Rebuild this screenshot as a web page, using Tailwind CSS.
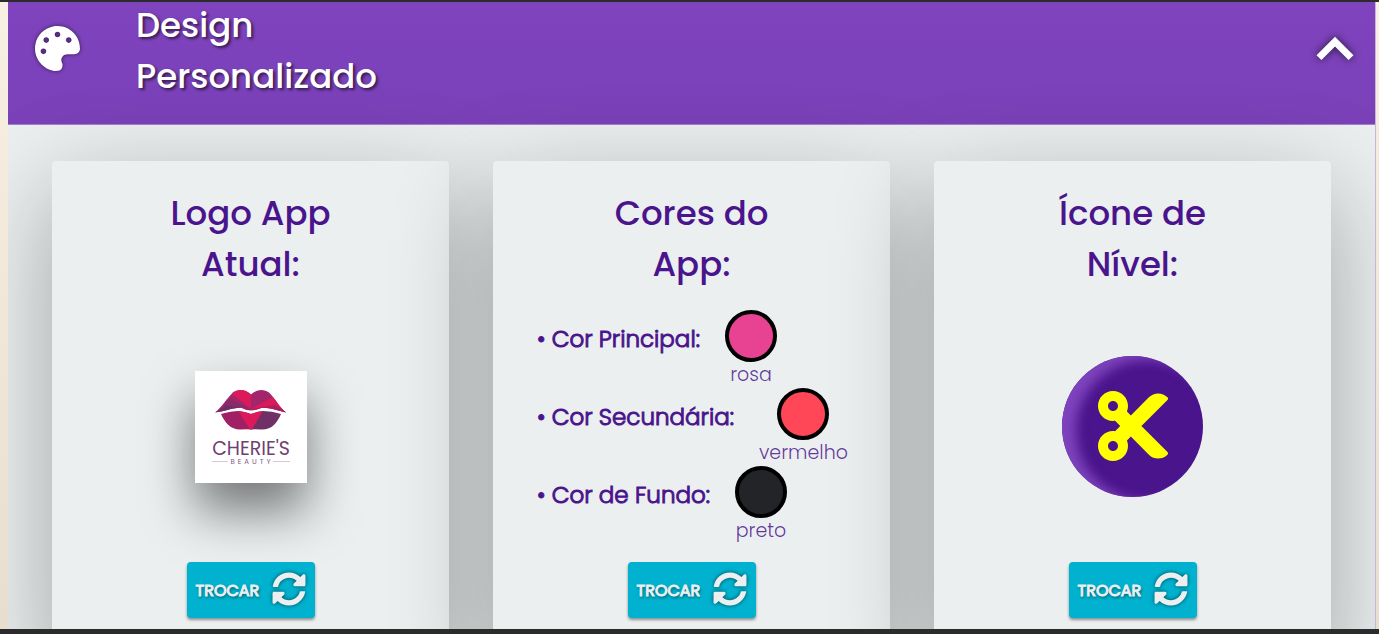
<!DOCTYPE html>
<html lang="pt-BR">
<head>
<meta charset="utf-8">
<meta name="viewport" content="width=device-width, initial-scale=1">
<title>Design Personalizado</title>
<script src="https://cdn.jsdelivr.net/npm/@tailwindcss/browser@4"></script>
</head>
<body class="flex h-screen flex-col overflow-hidden border-t-2 border-b-5 border-[#2b2b2b] bg-linear-to-b from-[#f8f0e2] to-[#e7decf] pr-[3px] pl-2 font-['Poppins','Inter',sans-serif] font-light text-[#4a148c]">
<svg class="hidden">
  <symbol id="sync" viewBox="0 0 512 512"><path d="M370.72 133.28C339.458 104.008 298.888 87.962 255.848 88c-77.458.068-144.328 53.178-162.791 126.85-1.344 5.363-6.122 9.15-11.651 9.15H24.103c-7.498 0-13.194-6.807-11.807-14.176C33.933 94.924 134.813 8 256 8c66.448 0 126.791 26.136 171.315 68.685L463.03 40.97C478.149 25.851 504 36.559 504 57.941V192c0 13.255-10.745 24-24 24H345.941c-21.382 0-32.09-25.851-16.971-40.971l41.75-41.749zM32 296h134.059c21.382 0 32.09 25.851 16.971 40.971l-41.75 41.75c31.262 29.273 71.835 45.319 114.876 45.28 77.418-.07 144.315-53.144 162.787-126.849 1.344-5.363 6.122-9.15 11.651-9.15h57.304c7.498 0 13.194 6.807 11.807 14.176C478.067 417.076 377.187 504 256 504c-66.448 0-126.791-26.136-171.315-68.685L48.97 471.03C33.851 486.149 8 475.441 8 454.059V320c0-13.255 10.745-24 24-24z"/></symbol>
</svg>
<section class="flex min-h-0 flex-1 flex-col overflow-hidden border-r border-[#c5b8d0] bg-[#ebeff0]">
  <header class="flex shrink-0 items-start border-b border-[#a67fd0] bg-linear-to-b from-[#7e43bd] to-[#7b41b9] pr-[3px] pb-[22px] pl-[27px] text-white">
    <svg class="mt-6 size-[45px] shrink-0 fill-white drop-shadow-[0_0_2px_rgba(0,0,0,0.6)]" viewBox="0 0 512 512" aria-hidden="true"><path d="M204.3 5C104.9 24.4 24.8 104.3 5.2 203.4c-37 187 131.7 326.4 258.8 306.7 41.2-6.4 61.4-54.6 42.5-91.7-23.1-45.4 9.9-98.4 60.9-98.4h79.7c35.8 0 64.8-29.6 64.9-65.3C511.5 97.1 368.1-26.9 204.3 5zM96 320c-17.7 0-32-14.3-32-32s14.3-32 32-32 32 14.3 32 32-14.3 32-32 32zm32-128c-17.7 0-32-14.3-32-32s14.3-32 32-32 32 14.3 32 32-14.3 32-32 32zm128-64c-17.7 0-32-14.3-32-32s14.3-32 32-32 32 14.3 32 32-14.3 32-32 32zm128 64c-17.7 0-32-14.3-32-32s14.3-32 32-32 32 14.3 32 32-14.3 32-32 32z"/></svg>
    <h1 class="-mt-0.5 ml-14 w-64 text-[34px] leading-[51px] font-medium text-shadow-[2px_2px_3px_rgba(0,0,0,0.6)]">Design Personalizado</h1>
    <button type="button" aria-label="Recolher" class="mt-[10px] ml-auto shrink-0">
      <svg class="size-[74px] fill-white drop-shadow-[0_0_4px_rgba(0,0,0,0.7)]" viewBox="0 0 24 24" aria-hidden="true"><path d="M12 8l-6 6 1.600 1.600L12 11.200l4.400 4.400L18 14z"/></svg>
    </button>
  </header>

  <div class="grid shrink-0 grid-cols-3 gap-11 px-11 pt-9 text-center">
    <article class="flex flex-col items-center rounded bg-[#ebeff0] pt-[27px] pb-11 shadow-[0_30px_100px_rgba(0,0,0,0.32)]">
      <h2 class="w-48 text-[34px] leading-[51px] font-medium">Logo App Atual:</h2>
      <div class="flex h-[272px] items-center pt-0.5">
        <svg class="size-[112px] bg-white shadow-[0_28px_50px_rgba(0,0,0,0.5)]" viewBox="0 0 112 112" role="img" aria-label="Cherie's Beauty">
          <clipPath id="upper"><path d="M20 41.5C27 36 32 27 38 21.5C43 18 50 18 56 23.500C62 18 69 18 74 21.500C80 27 84 36 91 41.500C83 40 74 36 66 37Q60 39.500 56 39.500Q51 39.500 47 37C39 36 29 41 20 41.500Z"/></clipPath>
          <clipPath id="lower"><path d="M26 43Q36 40 44 40Q51 41 56 43Q61 41 68 40Q77 40 86 43C82 52 77 59 66 58.500Q60 58 56 58.500Q51 58 46 58.500C36 59 30 52 26 43Z"/></clipPath>
          <g clip-path="url(#upper)">
            <path fill="#a3266a" d="M18 15h76v30H18z"/>
            <path fill="#dc1a5b" d="M36 22L44 15L56 22V38Z"/>
            <path fill="#6e2f68" d="M18 44L33 32L50 38Z"/>
            <path fill="#8a2a6a" d="M56 38L28 34L36 28Z"/>
            <path fill="#dc1a5b" d="M56 38L78 26L95 44Z"/>
            <path fill="#a81f62" d="M56 38L80 34L95 43Z"/>
          </g>
          <g clip-path="url(#lower)">
            <path fill="#a11f64" d="M24 38h33v22H24z"/>
            <path fill="#713065" d="M56 38h32v22H56z"/>
            <path fill="#dc1a5b" d="M42 38H69L56 60Z"/>
          </g>
          <text x="56" y="84" text-anchor="middle" class="fill-[#70406f] text-[19px] font-normal">CHERIE'S</text>
          <text x="57" y="93" text-anchor="middle" class="fill-[#81587d] text-[7px] font-normal tracking-[3px]">BEAUTY</text>
          <path stroke="#d9c7d5" d="M17 90.500h16M78 90.500h17"/>
        </svg>
      </div>
      <button type="button" class="flex h-14 w-32 items-center justify-between rounded bg-[#00b2cf] px-[9px] pt-0.5 text-base font-normal text-[#ebeff0] shadow-[0_2px_3px_rgba(0,0,0,0.4)] [-webkit-text-stroke:1px] text-shadow-[1px_2px_3px_rgba(0,0,0,0.6)]">TROCAR<svg class="-mt-1 size-[34px] fill-current drop-shadow-[0_0_2px_rgba(0,0,0,0.6)] [-webkit-text-stroke:0]" aria-hidden="true"><use href="#sync"/></svg></button>
    </article>

    <article class="flex flex-col items-center rounded bg-[#ebeff0] pt-[27px] pb-11 shadow-[0_30px_100px_rgba(0,0,0,0.32)]">
      <h2 class="w-48 text-[34px] leading-[51px] font-medium">Cores do App:</h2>
      <ul class="flex h-[272px] flex-col justify-center self-stretch pt-0.5 pl-11 text-[23px]">
        <li class="flex gap-[25px]"><span class="leading-[58px] whitespace-nowrap [-webkit-text-stroke:1px]">• Cor Principal:</span><span class="flex flex-col items-center"><span class="size-[52px] rounded-full border-4 border-black bg-[#e84393]"></span><span class="text-[19px] leading-[26px] text-[#4a148c]/85">rosa</span></span></li>
        <li class="flex gap-[25px]"><span class="leading-[58px] whitespace-nowrap [-webkit-text-stroke:1px]">• Cor Secundária:</span><span class="flex flex-col items-center"><span class="size-[52px] rounded-full border-4 border-black bg-[#ff4757]"></span><span class="text-[19px] leading-[26px] text-[#4a148c]/85">vermelho</span></span></li>
        <li class="flex gap-[25px]"><span class="leading-[58px] whitespace-nowrap [-webkit-text-stroke:1px]">• Cor de Fundo:</span><span class="flex flex-col items-center"><span class="size-[52px] rounded-full border-4 border-black bg-[#232428]"></span><span class="text-[19px] leading-[26px] text-[#4a148c]/85">preto</span></span></li>
      </ul>
      <button type="button" class="flex h-14 w-32 items-center justify-between rounded bg-[#00b2cf] px-[9px] pt-0.5 text-base font-normal text-[#ebeff0] shadow-[0_2px_3px_rgba(0,0,0,0.4)] [-webkit-text-stroke:1px] text-shadow-[1px_2px_3px_rgba(0,0,0,0.6)]">TROCAR<svg class="-mt-1 size-[34px] fill-current drop-shadow-[0_0_2px_rgba(0,0,0,0.6)] [-webkit-text-stroke:0]" aria-hidden="true"><use href="#sync"/></svg></button>
    </article>

    <article class="flex flex-col items-center rounded bg-[#ebeff0] pt-[27px] pb-11 shadow-[0_30px_100px_rgba(0,0,0,0.32)]">
      <h2 class="w-48 text-[34px] leading-[51px] font-medium">Ícone de Nível:</h2>
      <div class="flex h-[272px] items-center">
        <div class="flex size-[141px] items-center justify-center rounded-full bg-[#4a148c] shadow-[inset_14px_4px_12px_#7e43bd]">
          <svg class="h-20 w-[70px] fill-[#ffff00]" viewBox="0 0 448 512" aria-hidden="true"><path d="M278.06 256L444.48 89.57c4.69-4.69 4.69-12.29 0-16.97-32.8-32.8-85.99-32.8-118.79 0L210.18 188.12l-24.86-24.86c4.31-10.92 6.68-22.81 6.68-35.26 0-53.02-42.98-96-96-96S0 74.98 0 128s42.98 96 96 96c4.54 0 8.99-.32 13.36-.93L142.29 256l-32.93 32.93c-4.37-.61-8.83-.93-13.36-.93-53.02 0-96 42.98-96 96s42.98 96 96 96 96-42.98 96-96c0-12.45-2.37-24.34-6.68-35.26l24.86-24.86L325.69 439.4c32.8 32.8 85.99 32.8 118.79 0 4.69-4.68 4.69-12.28 0-16.97L278.06 256zM96 160c-17.64 0-32-14.36-32-32s14.36-32 32-32 32 14.36 32 32-14.36 32-32 32zm0 256c-17.64 0-32-14.36-32-32s14.36-32 32-32 32 14.36 32 32-14.36 32-32 32z"/></svg>
        </div>
      </div>
      <button type="button" class="flex h-14 w-32 items-center justify-between rounded bg-[#00b2cf] px-[9px] pt-0.5 text-base font-normal text-[#ebeff0] shadow-[0_2px_3px_rgba(0,0,0,0.4)] [-webkit-text-stroke:1px] text-shadow-[1px_2px_3px_rgba(0,0,0,0.6)]">TROCAR<svg class="-mt-1 size-[34px] fill-current drop-shadow-[0_0_2px_rgba(0,0,0,0.6)] [-webkit-text-stroke:0]" aria-hidden="true"><use href="#sync"/></svg></button>
    </article>
  </div>
</section>
</body>
</html>
